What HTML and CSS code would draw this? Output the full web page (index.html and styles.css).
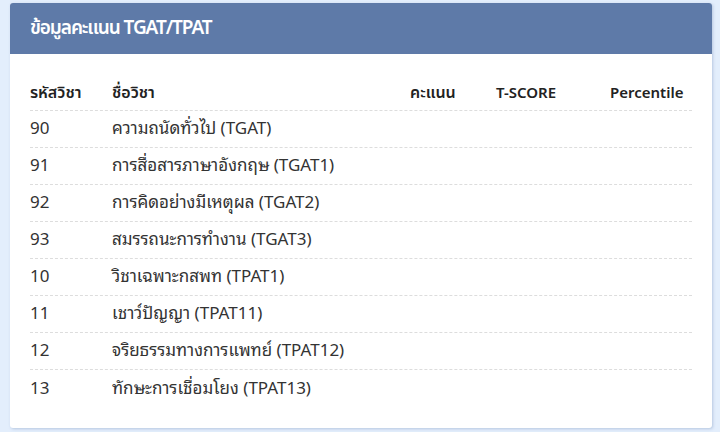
FILE: index.html
```html
<!DOCTYPE html>
<html lang="th">
<head>
<meta charset="utf-8">
<link rel="stylesheet" href="styles.css">
</head>
<body>
<div class="card">
  <div class="card-header">ข้อมูลคะแนน TGAT/TPAT</div>
  <div class="card-body">
    <div class="table">
      <div class="row head">
        <div class="cell">รหัสวิชา</div>
        <div class="cell">ชื่อวิชา</div>
        <div class="cell">คะแนน</div>
        <div class="cell latin">T-SCORE</div>
        <div class="cell latin">Percentile</div>
      </div>
      <div class="row"><div class="cell">90</div><div class="cell">ความถนัดทั่วไป (TGAT)</div><div class="cell"></div><div class="cell"></div><div class="cell"></div></div>
      <div class="row"><div class="cell">91</div><div class="cell">การสื่อสารภาษาอังกฤษ (TGAT1)</div><div class="cell"></div><div class="cell"></div><div class="cell"></div></div>
      <div class="row"><div class="cell">92</div><div class="cell">การคิดอย่างมีเหตุผล (TGAT2)</div><div class="cell"></div><div class="cell"></div><div class="cell"></div></div>
      <div class="row"><div class="cell">93</div><div class="cell">สมรรถนะการทำงาน (TGAT3)</div><div class="cell"></div><div class="cell"></div><div class="cell"></div></div>
      <div class="row"><div class="cell">10</div><div class="cell">วิชาเฉพาะกสพท (TPAT1)</div><div class="cell"></div><div class="cell"></div><div class="cell"></div></div>
      <div class="row"><div class="cell">11</div><div class="cell">เชาว์ปัญญา (TPAT11)</div><div class="cell"></div><div class="cell"></div><div class="cell"></div></div>
      <div class="row"><div class="cell">12</div><div class="cell">จริยธรรมทางการแพทย์ (TPAT12)</div><div class="cell"></div><div class="cell"></div><div class="cell"></div></div>
      <div class="row last"><div class="cell">13</div><div class="cell">ทักษะการเชื่อมโยง (TPAT13)</div><div class="cell"></div><div class="cell"></div><div class="cell"></div></div>
    </div>
  </div>
</div>
</body>
</html>
```

FILE: styles.css
```css
html, body {
  margin: 0;
  padding: 0;
}
body {
  background: #e3eefc;
  font-family: "Noto Sans Thai Looped", "Noto Sans", sans-serif;
  color: #333;
  padding: 3px 8px 4px 10px;
  height: 432px;
  box-sizing: border-box;
}
.card {
  width: 702px;
  background: #fff;
  border-radius: 3px;
  box-shadow: 1px 1px 3px rgba(80, 110, 160, 0.3);
  overflow: hidden;
}
.card-header {
  background: #5e7aa8;
  color: #fff;
  height: 51px;
  box-sizing: border-box;
  padding: 0 20px 1px;
  display: flex;
  align-items: center;
  font-family: "Noto Sans", "Noto Sans Thai", sans-serif;
  font-size: 19px;
  letter-spacing: -1.1px;
  font-weight: 600;
}
.card-body {
  padding: 20px 20px 21px;
}
.row {
  display: grid;
  grid-template-columns: 82px 298px 86px 114px 1fr;
  height: 37px;
  padding-bottom: 4px;
  align-items: center;
  border-bottom: 1px dashed #ddd;
  box-sizing: border-box;
  font-size: 17px;
  line-height: 24px;
}
.row.last {
  border-bottom: none;
}
.row.head {
  padding-bottom: 0;
  font-family: "Noto Sans", "Noto Sans Thai", sans-serif;
  font-size: 16px;
  font-weight: 600;
  color: #222;
}
.row.head .latin {
  font-size: 15px;
  font-weight: 600;
}
```
